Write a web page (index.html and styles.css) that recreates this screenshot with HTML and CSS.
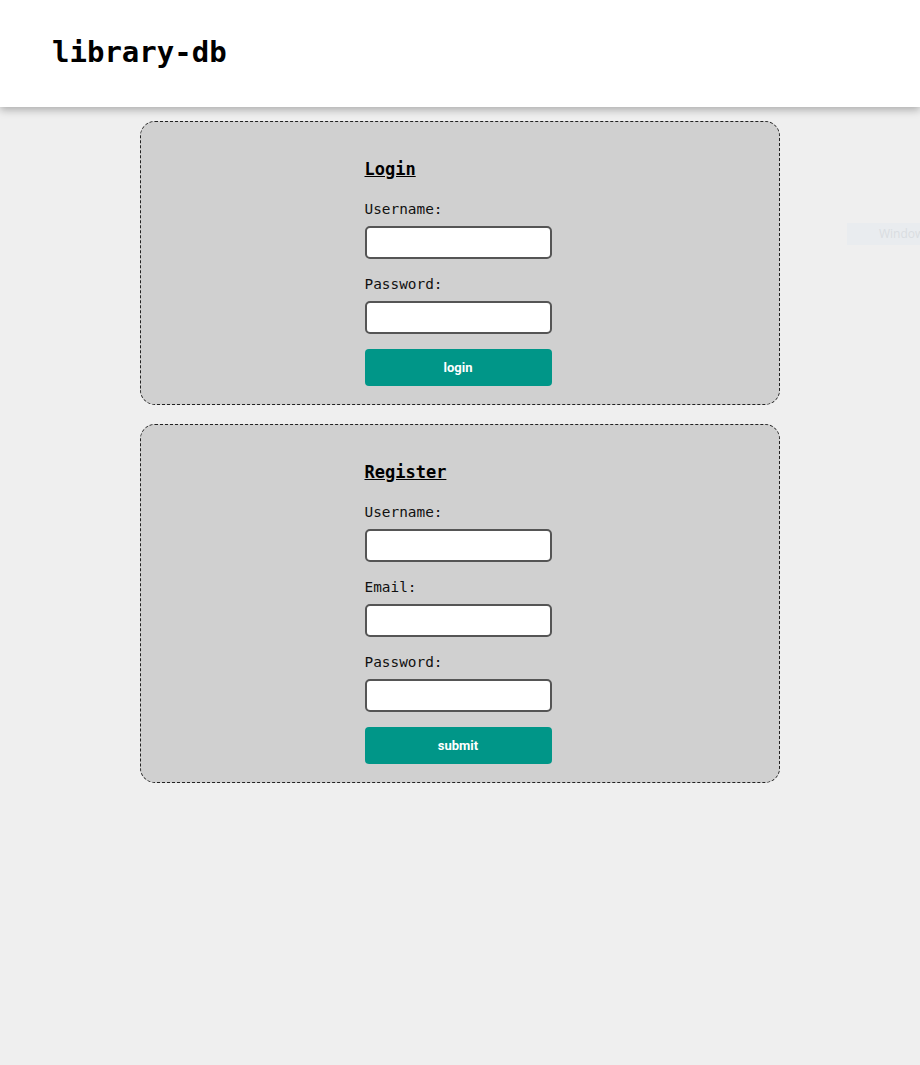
FILE: index.html
```html
<!DOCTYPE html>
<html lang="en">
<head>
    <meta charset="UTF-8">
    <meta name="viewport" content="width=device-width, initial-scale=1.0">
    <title>library-db</title>
    <link rel="stylesheet" href="styles.css">
</head>
<body>
    <header>
        <h1 class="brand">library-db</h1>
    </header>

    <div class="overlay-badge"><span>Windows</span></div>

    <main class="container">
        <section class="card">
            <form class="form">
                <h2>Login</h2>
                <label for="login-username">Username:</label>
                <input id="login-username" type="text">
                <label for="login-password">Password:</label>
                <input id="login-password" type="password">
                <button type="button" class="btn">login</button>
            </form>
        </section>

        <section class="card">
            <form class="form">
                <h2>Register</h2>
                <label for="reg-username">Username:</label>
                <input id="reg-username" type="text">
                <label for="reg-email">Email:</label>
                <input id="reg-email" type="email">
                <label for="reg-password">Password:</label>
                <input id="reg-password" type="password">
                <button type="button" class="btn">submit</button>
            </form>
        </section>
    </main>
</body>
</html>
```

FILE: styles.css
```css
body {
    background-color: #efefef;
    font-family: 'DejaVu Sans Mono', 'Liberation Mono', monospace;
    margin: 0;
    padding: 0;
}
header {
    background-color: white;
    height: 107px;
    box-shadow: 0 3px 8px rgba(0, 0, 0, 0.28);
    display: flex;
    align-items: center;
    padding: 0 52px;
    position: relative;
    z-index: 1;
}
.brand {
    margin: 0 0 3px 0;
    font-size: 29px;
    font-weight: bold;
    color: #000;
}
.container {
    width: 640px;
    margin: 14px auto 0;
    padding-right: 1px;
    display: flex;
    flex-direction: column;
    gap: 19px;
}
.card {
    background-color: #d0d0d0;
    border: 1px dashed #222;
    border-radius: 15px;
    padding: 36px 3px 18px 0;
    display: flex;
    justify-content: center;
}
.form {
    width: 187px;
    display: flex;
    flex-direction: column;
}
.form h2 {
    margin: 0 0 21px 0;
    font-size: 17px;
    line-height: 22px;
    font-weight: bold;
    text-decoration: underline;
    color: #000;
}
.form label {
    font-size: 14.4px;
    line-height: 17px;
    color: #111;
    margin-bottom: 8px;
}
.form input {
    box-sizing: border-box;
    height: 33px;
    width: 100%;
    margin: 0 0 17px 0;
    border: 2px solid #555;
    border-radius: 5px;
    background: white;
    padding: 0 6px;
}
.form input:last-of-type {
    margin-bottom: 15px;
}
.btn {
    height: 37px;
    background-color: #009688;
    color: white;
    border: none;
    border-radius: 4px;
    font-family: Roboto, 'Liberation Sans', sans-serif;
    font-size: 13px;
    font-weight: bold;
}
.overlay-badge {
    position: absolute;
    left: 847px;
    top: 223px;
    width: 73px;
    height: 22px;
    background-color: #e9ecef;
    overflow: hidden;
}
.overlay-badge span {
    display: block;
    padding-left: 32px;
    font-family: 'Open Sans', sans-serif;
    font-size: 12px;
    line-height: 22px;
    color: #d9dde1;
    white-space: nowrap;
}
```
